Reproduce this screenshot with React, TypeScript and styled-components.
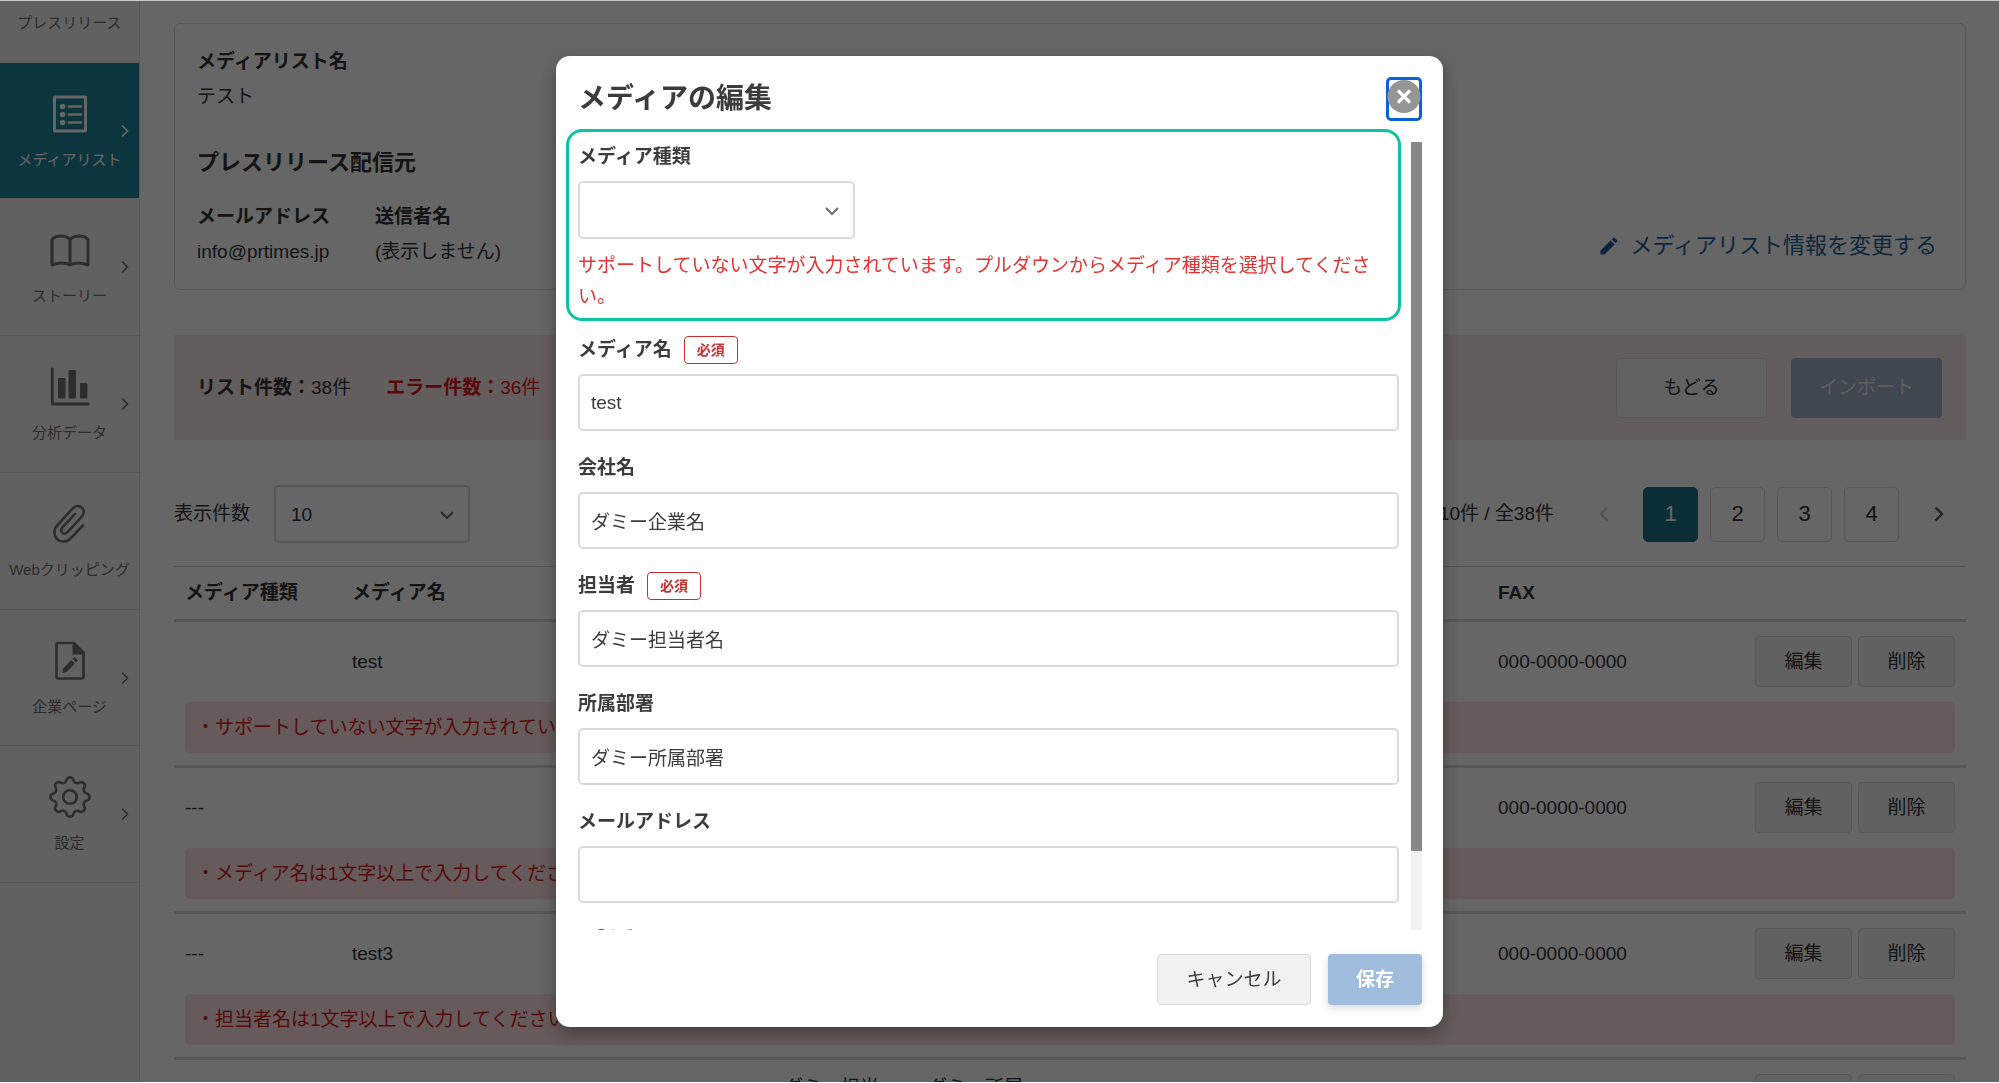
import React, { useState } from 'react';
import styled, { createGlobalStyle, css } from 'styled-components';

const GlobalStyle = createGlobalStyle`
  *, *::before, *::after { box-sizing: border-box; }
  body {
    margin: 0;
    background: #fff;
    color: #3c3c3c;
    font-family: "Liberation Sans", "Noto Sans CJK JP", sans-serif;
    font-size: 19px;
    line-height: 28px;
    overflow: hidden;
  }
  h1, h2, h3, p, dl, dt, dd { margin: 0; font-size: inherit; }
  button, input, select { font: inherit; color: inherit; margin: 0; }
  button { cursor: pointer; padding: 0; }
`;

/* ---------- page frame ---------- */

const Page = styled.div`
  display: flex;
  height: 100vh;
  overflow: hidden;
`;

const Sidebar = styled.aside`
  flex: 0 0 140px;
  background: #f2f2f2;
  border-right: 1px solid #dcdcdc;
`;

/* The page is scrolled, so the first entry is partly above the window. */
const Nav = styled.nav`
  display: grid;
  grid-auto-rows: 1fr;
  height: 957px;
  margin-top: -74px;
`;

const NavItem = styled.a<{ $active?: boolean }>`
  position: relative;
  display: flex;
  flex-direction: column;
  align-items: center;
  gap: 16px;
  padding-top: 31px;
  border-bottom: 1px solid #dcdcdc;
  color: #707070;
  font-size: 15px;
  line-height: 20px;
  white-space: nowrap;
  text-decoration: none;
  ${(p) => p.$active && css`
    background: #1f8599;
    color: #fff;
  `}
`;

const NavIcon = styled.svg`
  width: 42px;
  height: 40px;
  flex: none;
`;

const NavArrow = styled.svg`
  position: absolute;
  right: 9px;
  top: 60px;
  width: 10px;
  height: 16px;
`;

const Main = styled.main`
  flex: 1;
  min-width: 0;
  padding: 23px 33px 0 34px;
`;

/* ---------- list information ---------- */

const InfoCard = styled.section`
  display: flex;
  justify-content: space-between;
  align-items: flex-end;
  padding: 24px 24px 23px 22px;
  border: 1px solid #dcdcdc;
  border-radius: 6px;
  color: #333;
`;

const Pair = styled.div`
  display: grid;
  gap: 7px;
`;

const Term = styled.dt`
  font-weight: 700;
`;

const InfoHeading = styled.h2`
  margin: 38px 0 26px;
  font-size: 22px;
  font-weight: 700;
`;

const PairRow = styled.dl`
  display: flex;
  gap: 45px;
`;

const EditLink = styled.a`
  display: flex;
  align-items: center;
  gap: 13px;
  padding: 0 4px 6px;
  color: #25629c;
  font-size: 22px;
  text-decoration: none;
`;

/* ---------- error summary ---------- */

const SummaryBar = styled.section`
  display: flex;
  align-items: center;
  gap: 24px;
  margin-top: 45px;
  padding: 23px 24px 22px 23px;
  background: #fbe8e8;
  color: #333;
`;

const Count = styled.p<{ $error?: boolean }>`
  margin-right: 11px;
  color: ${(p) => (p.$error ? '#e01818' : 'inherit')};
`;

const ButtonGroup = styled.div`
  display: flex;
  gap: 24px;
  margin-left: auto;
`;

const BarButton = styled.button<{ $primary?: boolean }>`
  width: 151px;
  height: 60px;
  border: 1px solid ${(p) => (p.$primary ? '#a0b1cb' : '#e0dcdc')};
  border-radius: 4px;
  background: ${(p) => (p.$primary ? '#a0b1cb' : '#f4f4f4')};
  color: ${(p) => (p.$primary ? '#ececec' : '#333')};
`;

/* ---------- list controls ---------- */

const Controls = styled.div`
  display: flex;
  align-items: center;
  margin-top: 45px;
  color: #333;
`;

const SelectBox = styled.span<{ $width: number }>`
  position: relative;
  display: block;
  width: ${(p) => p.$width}px;
  height: 58px;
`;

const Select = styled.select`
  width: 100%;
  height: 100%;
  padding: 2px 40px 0 15px;
  border: 2px solid #dadada;
  border-radius: 5px;
  background: transparent;
  appearance: none;
`;

const SelectArrow = styled.svg`
  position: absolute;
  right: 16px;
  top: 25px;
  width: 14px;
  height: 10px;
  pointer-events: none;
`;

const ControlLabel = styled.label`
  margin-right: 24px;
`;

const Range = styled.p`
  margin-left: auto;
  margin-right: 22px;
`;

const Pager = styled.nav`
  display: flex;
  gap: 12px;
`;

const PageButton = styled.button<{ $kind?: 'current' | 'arrow' }>`
  display: grid;
  place-items: center;
  width: 55px;
  height: 55px;
  border: 1px solid #dcdcdc;
  border-radius: 5px;
  background: none;
  font-size: 22px;
  ${(p) => p.$kind === 'current' && css`
    border-color: #1a7388;
    background: #1a7388;
    color: #fff;
  `}
  ${(p) => p.$kind === 'arrow' && css`
    border-color: transparent;
    color: #555;
    &:disabled { color: #cfcfcf; }
  `}
`;

/* ---------- table ---------- */

const Table = styled.table`
  width: 100%;
  margin-top: 23px;
  border-spacing: 0;
  table-layout: fixed;
  color: #333;
  text-align: left;
`;

const Col = styled.col<{ $width?: number }>`
  width: ${(p) => (p.$width ? `${p.$width}px` : 'auto')};
`;

const Th = styled.th`
  height: 56px;
  padding: 0 11px;
  border-top: 1px solid #d0d0d0;
  border-bottom: 3px solid #dadada;
`;

const Td = styled.td`
  height: 65px;
  padding: 14px 24px 0 11px;
  line-height: 25px;
`;

const ActionTd = styled.td`
  padding: 14px 11px 0;
`;

const Actions = styled.div`
  display: flex;
  gap: 6px;
`;

const RowButton = styled.button`
  flex: 1;
  height: 51px;
  border: 1px solid #dcdcdc;
  border-radius: 4px;
  background: #f2f2f2;
`;

const ErrorTd = styled.td`
  padding: 15px 11px 12px;
  border-bottom: 3px solid #dadada;
`;

const RowError = styled.p`
  padding: 12px 11px 11px;
  border-radius: 5px;
  background: #ffe2e2;
  color: #d81c1c;
`;

/* ---------- dialog ---------- */

const Overlay = styled.div`
  position: fixed;
  inset: 0;
  display: grid;
  place-items: center;
  border-top: 1px solid #c6cac9;
  border-bottom: 1px solid #fff;
  background: rgba(0, 0, 0, 0.6);
`;

const Dialog = styled.div`
  position: relative;
  display: flex;
  flex-direction: column;
  width: 887px;
  height: calc(100vh - 112px);
  padding: 21px 21px 22px 22px;
  border-radius: 14px;
  background: #fff;
  box-shadow: 0 6px 18px rgba(0, 0, 0, 0.35);
`;

const DialogHeader = styled.header`
  display: flex;
  align-items: flex-start;
  justify-content: space-between;
  height: 65px;
  flex: none;
`;

const DialogTitle = styled.h1`
  font-size: 28px;
  line-height: 44px;
`;

const CloseButton = styled.button`
  display: flex;
  justify-content: center;
  width: 36px;
  height: 44px;
  border: 3px solid #0a62d6;
  border-radius: 5px;
  background: #fff;
`;

const DialogBody = styled.div`
  display: flex;
  flex: 1;
  min-height: 0;
  gap: 12px;
`;

const Fields = styled.form`
  flex: 1;
  overflow-y: auto;
  scrollbar-width: none;
`;

const ScrollTrack = styled.div`
  width: 11px;
  background: #f1f1f1;
`;

const ScrollThumb = styled.div`
  height: 90%;
  background: #888;
`;

const Field = styled.div`
  margin-bottom: 22px;
`;

const FieldLabel = styled.label`
  display: flex;
  align-items: center;
  gap: 12px;
  height: 28px;
  margin-bottom: 11px;
  padding-top: 2px;
  font-weight: 700;
`;

const Required = styled.span`
  padding: 0 12px;
  border: 1px solid #c8302f;
  border-radius: 4px;
  color: #c8302f;
  font-size: 14px;
  line-height: 26px;
`;

const TextInput = styled.input`
  display: block;
  width: 100%;
  height: 57px;
  padding: 0 11px;
  border: 2px solid #dadada;
  border-radius: 5px;
  background: #fff;
`;

const FieldError = styled.p`
  margin-top: 11px;
  padding: 0 8px 1px 0;
  color: #e83030;
  line-height: 31px;
`;

/* Green frame drawn over the field that needs attention. */
const Highlight = styled.div`
  position: absolute;
  top: 73px;
  left: 10px;
  right: 42px;
  height: 192px;
  border: 3px solid #0cc3a3;
  border-radius: 16px;
  pointer-events: none;
`;

const DialogFooter = styled.footer`
  display: flex;
  justify-content: flex-end;
  gap: 17px;
  flex: none;
  margin-top: 24px;
`;

const CancelButton = styled.button`
  width: 154px;
  height: 51px;
  border: 1px solid #dadada;
  border-radius: 4px;
  background: #f1f1f1;
`;

const SaveButton = styled.button`
  width: 94px;
  height: 51px;
  border: 0;
  border-radius: 4px;
  background: #9fbcdc;
  color: #fff;
  font-weight: 700;
  box-shadow: 0 3px 8px rgba(0, 0, 0, 0.15);
`;

/* ---------- icons ---------- */

const ListIcon = () => (
  <NavIcon viewBox="0 0 42 40" fill="none" stroke="currentColor" aria-hidden="true">
    <rect x="5.5" y="3" width="31" height="34" rx="0.5" strokeWidth="3" />
    <path d="M20 12.5h12M20 20.5h12M20 28.5h12" strokeWidth="2.6" strokeLinecap="round" />
    <g fill="currentColor" stroke="none">
      <circle cx="13.5" cy="12.5" r="2.8" />
      <circle cx="13.5" cy="20.5" r="2.8" />
      <circle cx="13.5" cy="28.5" r="2.8" />
    </g>
  </NavIcon>
);

const BookIcon = () => (
  <NavIcon viewBox="0 0 42 40" fill="none" stroke="currentColor" strokeWidth="3" strokeLinejoin="round" aria-hidden="true">
    <path d="M21 10C19 7 15.5 6 12 6S5 7 3 9.500V35C9 32.500 16 32.500 21 35C26 32.500 33 32.500 39 35V9.500C37 7 33.500 6 30 6S23 7 21 10ZM21 10V35" />
  </NavIcon>
);

const ChartIcon = () => (
  <NavIcon viewBox="0 0 42 40" fill="currentColor" aria-hidden="true">
    <path d="M3.200 2v35h36" fill="none" stroke="currentColor" strokeWidth="2.800" strokeLinecap="round" strokeLinejoin="round" />
    <rect x="9" y="11" width="7.500" height="20.500" rx="1" />
    <rect x="19.500" y="3" width="7.500" height="28.500" rx="1" />
    <rect x="31" y="16" width="7.500" height="15.500" rx="1" />
  </NavIcon>
);

const ClipIcon = () => (
  <NavIcon viewBox="0 0 42 40" fill="none" stroke="currentColor" strokeWidth="2.600" strokeLinecap="round" aria-hidden="true">
    <path d="M34 21.500L21.500 34.500C17.500 38.500 11.500 38.500 8 35S4.500 25 8.500 21L24 4.200C26.800 1.300 30.600 1.300 33 3.800S35.200 10 32.500 13L18.500 28.200C16.800 30 14.600 30 13.200 28.600S12 25 13.700 23.200L26 9.800" />
  </NavIcon>
);

const PageIcon = () => (
  <NavIcon viewBox="0 0 42 40" aria-hidden="true">
    <path d="M9.500 2H25L34.500 11.500V35.500a2 2 0 0 1-2 2H9.500a2 2 0 0 1-2-2V4a2 2 0 0 1 2-2Z" fill="none" stroke="currentColor" strokeWidth="2.600" />
    <path d="M23.500 2L35 13.500H23.500ZM13.500 32l.5-4.500L22.500 19l3.500 3.500L17.500 31ZM23.500 17.800l2-1.800 3.500 3.300-2 2Z" fill="currentColor" />
  </NavIcon>
);

const gearPath = (() => {
  const steps = 96;
  const points: string[] = [];
  for (let i = 0; i < steps; i += 1) {
    const a = (i / steps) * Math.PI * 2;
    const r = 17.4 + 2.300 * Math.tanh(1.600 * Math.cos(8 * a));
    points.push(`${(21 + r * Math.cos(a)).toFixed(2)} ${(20 + r * Math.sin(a)).toFixed(2)}`);
  }
  return `M${points.join('L')}Z`;
})();

const GearIcon = () => (
  <NavIcon viewBox="0 0 42 40" fill="none" stroke="currentColor" strokeWidth="2.600" strokeLinejoin="round" overflow="visible" aria-hidden="true">
    <path d={gearPath} />
    <circle cx="21" cy="20" r="6.800" />
  </NavIcon>
);

const ChevronDown = () => (
  <SelectArrow viewBox="0 0 14 10" fill="none" stroke="#707070" strokeWidth="2.200" aria-hidden="true">
    <path d="M1 2l6 6 6-6" />
  </SelectArrow>
);

const PencilIcon = () => (
  <svg width="18" height="18" viewBox="0 0 18 18" fill="#1d5a99" aria-hidden="true">
    <path d="M0.500 17.500V13.500L10.500 3.500L14.500 7.500L4.500 17.500ZM11.700 2.400L13.500 0.700Q14 .2 14.500 .7L17.300 3.500Q17.800 4 17.300 4.500L15.600 6.300Z" />
  </svg>
);

const Arrow = ({ left }: { left?: boolean }) => (
  <svg width="10" height="16" viewBox="0 0 10 16" fill="none" stroke="currentColor" strokeWidth="2.400" aria-hidden="true">
    <path d={left ? 'M8.500 1.500L2 8l6.500 6.500' : 'M1.500 1.500L8 8l-6.500 6.500'} />
  </svg>
);

/* ---------- data ---------- */

const navItems = [
  { label: 'プレスリリース', icon: null, arrow: true },
  { label: 'メディアリスト', icon: <ListIcon />, arrow: true, active: true },
  { label: 'ストーリー', icon: <BookIcon />, arrow: true },
  { label: '分析データ', icon: <ChartIcon />, arrow: true },
  { label: 'Webクリッピング', icon: <ClipIcon />, arrow: false },
  { label: '企業ページ', icon: <PageIcon />, arrow: true },
  { label: '設定', icon: <GearIcon />, arrow: true },
];

const columns: { title: string; width?: number }[] = [
  { title: 'メディア種類', width: 167 },
  { title: 'メディア名', width: 216 },
  { title: '会社名', width: 216 },
  { title: '担当者', width: 144 },
  { title: '所属部署', width: 144 },
  { title: 'メールアドレス' },
  { title: '電話番号', width: 167 },
  { title: 'FAX', width: 257 },
  { title: '', width: 222 },
];

const rows = [
  { type: '', name: 'test', error: 'サポートしていない文字が入力されています。プルダウンからメディア種類を選択してください。' },
  { type: '---', name: '', error: 'メディア名は1文字以上で入力してください。' },
  { type: '---', name: 'test3', error: '担当者名は1文字以上で入力してください。' },
  { type: '---', name: 'test4', error: '所属部署は1文字以上で入力してください。' },
];

const textFields = [
  { id: 'name', label: 'メディア名', required: true, value: 'test' },
  { id: 'company', label: '会社名', value: 'ダミー企業名' },
  { id: 'person', label: '担当者', required: true, value: 'ダミー担当者名' },
  { id: 'section', label: '所属部署', value: 'ダミー所属部署' },
  { id: 'mail', label: 'メールアドレス', value: '' },
  { id: 'tel', label: '電話番号', value: '' },
];

/* ---------- sections ---------- */

const MediaTable = () => (
  <Table>
    <colgroup>
      {columns.map((c) => <Col key={c.title} $width={c.width} />)}
    </colgroup>
    <thead>
      <tr>{columns.map((c) => <Th key={c.title} scope="col">{c.title}</Th>)}</tr>
    </thead>
    <tbody>
      {rows.map((r) => (
        <React.Fragment key={r.error}>
          <tr>
            <Td>{r.type}</Td>
            <Td>{r.name}</Td>
            <Td>ダミー企業名</Td>
            <Td>ダミー担当者名</Td>
            <Td>ダミー所属部署</Td>
            <Td />
            <Td />
            <Td>000-0000-0000</Td>
            <ActionTd>
              <Actions>
                <RowButton type="button">編集</RowButton>
                <RowButton type="button">削除</RowButton>
              </Actions>
            </ActionTd>
          </tr>
          <tr>
            <ErrorTd colSpan={columns.length}>
              <RowError>・{r.error}</RowError>
            </ErrorTd>
          </tr>
        </React.Fragment>
      ))}
    </tbody>
  </Table>
);

const EditDialog = () => {
  const [values, setValues] = useState<Record<string, string>>(
    Object.fromEntries(textFields.map((f) => [f.id, f.value])),
  );
  return (
    <Overlay>
      <Dialog role="dialog" aria-modal="true" aria-labelledby="dialog-title">
        <DialogHeader>
          <DialogTitle id="dialog-title">メディアの編集</DialogTitle>
          <CloseButton type="button" aria-label="閉じる">
            <svg width="32" height="33" viewBox="0 0 32 33" overflow="visible" aria-hidden="true">
              <circle cx="16" cy="16.5" r="16.5" fill="#959595" />
              <path d="M10 10.500l12 12M22 10.500l-12 12" stroke="#fff" strokeWidth="3.200" />
            </svg>
          </CloseButton>
        </DialogHeader>
        <DialogBody>
          <Fields id="media-form">
            <Field>
              <FieldLabel htmlFor="media-type">メディア種類</FieldLabel>
              <SelectBox $width={277}>
                <Select id="media-type" defaultValue="">
                  <option value="" />
                </Select>
                <ChevronDown />
              </SelectBox>
              <FieldError>
                サポートしていない文字が入力されています。プルダウンからメディア種類を選択してください。
              </FieldError>
            </Field>
            {textFields.map((f) => (
              <Field key={f.id}>
                <FieldLabel htmlFor={f.id}>
                  {f.label}
                  {f.required && <Required>必須</Required>}
                </FieldLabel>
                <TextInput
                  id={f.id}
                  value={values[f.id]}
                  onChange={(e) => setValues({ ...values, [f.id]: e.target.value })}
                />
              </Field>
            ))}
          </Fields>
          <ScrollTrack aria-hidden="true"><ScrollThumb /></ScrollTrack>
        </DialogBody>
        <DialogFooter>
          <CancelButton type="button">キャンセル</CancelButton>
          <SaveButton type="submit" form="media-form">保存</SaveButton>
        </DialogFooter>
        <Highlight />
      </Dialog>
    </Overlay>
  );
};

export default function App() {
  return (
    <>
      <GlobalStyle />
      <Page>
        <Sidebar>
          <Nav>
            {navItems.map((item) => (
              <NavItem key={item.label} href="#" $active={item.active}>
                {item.icon ?? <NavIcon aria-hidden="true" />}
                {item.label}
                {item.arrow && (
                  <NavArrow viewBox="0 0 10 16" fill="none" stroke="currentColor" strokeWidth="1.600" aria-hidden="true">
                    <path d="M2 2.500L7.500 8L2 13.500" />
                  </NavArrow>
                )}
              </NavItem>
            ))}
          </Nav>
        </Sidebar>
        <Main>
          <InfoCard>
            <div>
              <dl>
                <Pair>
                  <Term>メディアリスト名</Term>
                  <dd>テスト</dd>
                </Pair>
              </dl>
              <InfoHeading>プレスリリース配信元</InfoHeading>
              <PairRow>
                <Pair>
                  <Term>メールアドレス</Term>
                  <dd>info@prtimes.jp</dd>
                </Pair>
                <Pair>
                  <Term>送信者名</Term>
                  <dd>(表示しません)</dd>
                </Pair>
              </PairRow>
            </div>
            <EditLink href="#">
              <PencilIcon />
              メディアリスト情報を変更する
            </EditLink>
          </InfoCard>

          <SummaryBar>
            <Count><b>リスト件数：</b>38件</Count>
            <Count $error><b>エラー件数：</b>36件</Count>
            <ButtonGroup>
              <BarButton type="button">もどる</BarButton>
              <BarButton type="button" $primary>インポート</BarButton>
            </ButtonGroup>
          </SummaryBar>

          <Controls>
            <ControlLabel htmlFor="page-size">表示件数</ControlLabel>
            <SelectBox $width={196}>
              <Select id="page-size" defaultValue="10">
                <option>10</option>
                <option>20</option>
              </Select>
              <ChevronDown />
            </SelectBox>
            <Range>1〜10件 / 全38件</Range>
            <Pager aria-label="ページ">
              <PageButton type="button" $kind="arrow" disabled aria-label="前へ"><Arrow left /></PageButton>
              <PageButton type="button" $kind="current">1</PageButton>
              <PageButton type="button">2</PageButton>
              <PageButton type="button">3</PageButton>
              <PageButton type="button">4</PageButton>
              <PageButton type="button" $kind="arrow" aria-label="次へ"><Arrow /></PageButton>
            </Pager>
          </Controls>

          <MediaTable />
        </Main>
      </Page>
      <EditDialog />
    </>
  );
}
